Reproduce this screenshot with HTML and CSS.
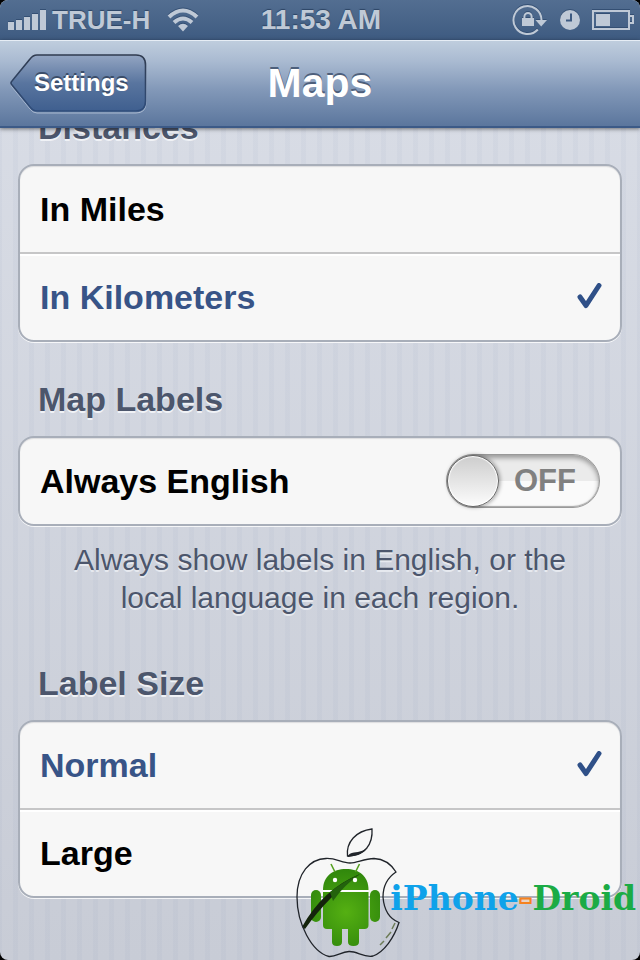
FILE: index.html
```html
<!DOCTYPE html>
<html lang="en">
<head>
  <meta charset="UTF-8" />
  <meta name="viewport" content="width=device-width, initial-scale=1" />
  <title>Maps - Settings</title>
  <link rel="stylesheet" href="styles.css">
</head>
<body>
  <div class="phone">
    <div class="status">
      <div class="status-left">
        <svg class="signal" width="38" height="20" viewBox="0 0 38 20" aria-hidden="true">
          <path d="M0 12h6v8H0zM8 10h6v10H8zM16 7h6v13h-6zM24 4h6v16h-6zM32 0h6v20h-6z"/>
        </svg>
        <span class="carrier">TRUE-H</span>
        <svg class="wifi" width="32" height="24" viewBox="0 0 32 24" aria-hidden="true">
          <path d="M16 23.5l-5-5.500q5-4.500 10 0z"/>
          <path class="line" d="M2 9Q16-4 30 9M7 14.500q9-8 18 0"/>
        </svg>
      </div>
      <span class="time">11:53 AM</span>
      <div class="status-right">
        <svg width="36" height="32" viewBox="0 0 36 32" aria-hidden="true">
          <path class="thin" d="M25.8 25.500A14 14 0 1 1 29.500 16"/>
          <path d="M23.5 16h11.500l-5.800 6.500z"/>
          <path d="M10 14h12v8H10z"/>
          <path class="thin" d="M12.400 15v-2.500a3.600 3.600 0 0 1 7.200 0V15"/>
        </svg>
        <svg class="clock" width="20" height="20" viewBox="0 0 20 20" aria-hidden="true">
          <circle cx="10" cy="10" r="10"/>
          <path class="hands" d="M11 3.5V10.5H6"/>
        </svg>
        <svg class="battery" width="42" height="20" viewBox="0 0 42 20" aria-hidden="true">
          <path class="thin" d="M1 1h36v18H1zM38 6h3v7h-3"/>
          <path d="M4 4h14v12H4z"/>
        </svg>
      </div>
    </div>

    <header class="navbar">
      <button class="back" type="button">
        <svg width="138" height="60" viewBox="0 0 138 60" aria-hidden="true">
          <defs>
            <linearGradient id="backFill" x1="0" y1="0" x2="0" y2="1">
              <stop offset="0" stop-color="#93a5c2"/>
              <stop offset=".5" stop-color="#59759f"/>
              <stop offset="1" stop-color="#3f5f8f"/>
            </linearGradient>
            <linearGradient id="backEdge" x1="0" y1="0" x2="0" y2="1">
              <stop offset="0" stop-color="#303b4f"/>
              <stop offset="1" stop-color="#2f4d7b"/>
            </linearGradient>
          </defs>
          <path d="M27 3H126Q136 3 136 13V49Q136 59 126 59H27Q23 59 20 55L2 33Q0 31 2 28L20 7Q23 3 27 3Z" fill="none" stroke="#a9b8cf" stroke-width="1"/>
          <path d="M27 1H126Q135.500 1 135.500 11V47Q135.500 57 126 57H27Q23 57 20 53L2 31Q0 29 2 27L20 5Q23 1 27 1Z" fill="url(#backFill)" stroke="url(#backEdge)" stroke-width="1.600"/>
        </svg>
        <span>Settings</span>
      </button>
      <h1>Maps</h1>
    </header>

    <main>
      <section role="radiogroup" aria-labelledby="distances">
        <h2 id="distances">Distances</h2>
        <div class="group">
          <label class="row">
            <span>In Miles</span>
            <input type="radio" name="distance">
            <svg class="check" width="26" height="28" viewBox="0 0 26 28" aria-hidden="true"><path d="M4 14l6 8.500L23 2.500"/></svg>
          </label>
          <label class="row">
            <span>In Kilometers</span>
            <input type="radio" name="distance" checked>
            <svg class="check" width="26" height="28" viewBox="0 0 26 28" aria-hidden="true"><path d="M4 14l6 8.500L23 2.500"/></svg>
          </label>
        </div>
      </section>

      <section>
        <h2>Map Labels</h2>
        <div class="group">
          <label class="row">
            <span>Always English</span>
            <input type="checkbox" role="switch">
            <span class="switch" aria-hidden="true"><span class="knob"></span><span class="state">OFF</span></span>
          </label>
        </div>
        <p class="note">Always show labels in English, or the local language in each region.</p>
      </section>

      <section role="radiogroup" aria-labelledby="labelSize">
        <h2 id="labelSize">Label Size</h2>
        <div class="group">
          <label class="row">
            <span>Normal</span>
            <input type="radio" name="size" checked>
            <svg class="check" width="26" height="28" viewBox="0 0 26 28" aria-hidden="true"><path d="M4 14l6 8.500L23 2.500"/></svg>
          </label>
          <label class="row">
            <span>Large</span>
            <input type="radio" name="size">
            <svg class="check" width="26" height="28" viewBox="0 0 26 28" aria-hidden="true"><path d="M4 14l6 8.500L23 2.500"/></svg>
          </label>
        </div>
      </section>
    </main>

    <div class="watermark">
      <svg class="logo" width="110" height="140" viewBox="0 0 110 140" aria-hidden="true">
        <defs>
          <radialGradient id="droid" gradientUnits="userSpaceOnUse" cx="56" cy="92" r="44">
            <stop offset="0" stop-color="#55b012"/>
            <stop offset="1" stop-color="#2f860c"/>
          </radialGradient>
        </defs>
        <g fill="url(#droid)">
          <path d="M33 70C33 56 43 49 56 49s22.500 7 22.500 21z"/>
          <path d="M33 72h45.500v33q0 4-4 4H37q-4 0-4-4z"/>
          <rect x="21" y="70" width="10" height="32" rx="5"/>
          <rect x="80" y="70" width="10" height="32" rx="5"/>
          <path d="M42 108h10v14q0 4-5 4t-5-4zM58 108h11v14q0 4-5.500 4t-5.500-4z"/>
        </g>
        <path d="M41 44l4 8M69.500 44l-4 8" stroke="#55a020" stroke-width="1.600" fill="none"/>
        <path d="M33 71h45.500" stroke="#fff" stroke-width="1.300"/>
        <path d="M12 107Q33 69 70 54Q39 75 15 109z" fill="#14240c"/>
        <path d="M43 81Q54 65 70 54Q54 61 40 72z" fill="#23620d"/>
        <circle cx="45" cy="60" r="2.200" fill="#fff"/>
        <circle cx="65" cy="60" r="2.200" fill="#fff"/>
        <g fill="none" stroke="#20242a" stroke-width="1.300">
          <path d="M60 43C67 43 74 38.500 84 38.500C95 39 101 44 106 52C97 58 93 66 93 77C94 90 100 99 109 102.500C104 118 94 132 83 136C74 138 67 131 59 131.500C51 132 46 137 39 136.500C22 132 7 104 7 77C7 53 20 39 36 38.500C46 38 52 43 60 43Z"/>
          <path d="M57.500 36C56 22 66 11 82 9C83 24 75 36 57.500 36Z"/>
        </g>
        <path d="M58 36q1-3 6-3.500 8-.5 14-5-5 8-20 9.500z" fill="#20242a"/>
        <path d="M90 125l4-4m2-3l5-6m1-3l3-6" stroke="#6d7c58" stroke-width="1.500" fill="none"/>
      </svg>
      <span class="brand"><span class="blue">iPhone</span><span class="dash">-</span><span class="green">Droid</span></span>
    </div>
  </div>
</body>
</html>
```

FILE: styles.css
```css
* { box-sizing: border-box; }
html { background: #000; }
body { margin: 0; font-family: "Liberation Sans", Arial, sans-serif; }
h1, h2, p { margin: 0; }

.phone {
  position: relative;
  min-height: 100vh;
  overflow: hidden;
  border-radius: 8px;
  background:
    repeating-linear-gradient(90deg, rgba(110, 130, 170, 0.05) 0 2px, transparent 2px 13px, rgba(110, 130, 170, 0.05) 13px 16px),
    linear-gradient(#dadee7, #c8ccd6);
}

/* status bar */
.status {
  display: grid;
  grid-template-columns: 1fr auto 1fr;
  align-items: center;
  height: 40px;
  padding: 0 6px 0 8px;
  background: linear-gradient(#536e91, #3e5b81);
  color: #bfc9d6;
  font-weight: bold;
  text-shadow: 0 -1px 1px #2d4565;
}
.status svg {
  fill: #bfc9d6;
  filter: drop-shadow(0 -1px 0 #344f73);
}
.status-left, .status-right { display: flex; align-items: center; }
.status-right { justify-content: flex-end; height: 38px; }
.carrier { margin: 0 17px 0 6px; font-size: 26px; }
.time { font-size: 28px; }
.status .line { fill: none; stroke: #bfc9d6; stroke-width: 4; }
.status .thin { fill: none; stroke: #bfc9d6; stroke-width: 2; }
.status .hands { fill: none; stroke: #3e5b81; stroke-width: 2; }
.clock { margin: 0 12px; }

/* navigation bar */
.navbar {
  position: relative;
  z-index: 1;
  display: grid;
  grid-template-columns: 1fr auto 1fr;
  align-items: center;
  height: 88px;
  padding: 0 10px;
  border-bottom: 2px solid #3c5a87;
  background: linear-gradient(#c0cede, #a9bad1 25%, #8298b8 58%, #5b769d);
  box-shadow: 0 1px 4px rgba(0, 0, 0, 0.5), inset 0 1px 0 #e6edf5;
  color: #fff;
}
.navbar h1 {
  grid-column: 2;
  font-size: 41px;
  text-shadow: 0 -2px 0 #4d5f7b;
}
.back {
  position: relative;
  justify-self: start;
  height: 58px;
  padding: 0 18px 0 24px;
  border: 0;
  background: none;
  color: #fff;
  font: bold 24px "Liberation Sans", Arial, sans-serif;
  text-shadow: 0 -2px 0 #3b4d69;
  cursor: pointer;
}
.back svg { position: absolute; left: 0; top: 0; }
.back span { position: relative; }

/* settings list */
main {
  display: flex;
  flex-direction: column;
  gap: 37px;
  margin-top: -21px;
  padding: 0 18px 62px;
}
h2 {
  padding: 0 20px;
  margin-bottom: 17px;
  color: #4c566c;
  font-size: 34px;
  line-height: 40px;
  text-shadow: 0 2px 0 #f0f2f6;
}
.group {
  overflow: hidden;
  border: 2px solid #a8aeb9;
  border-radius: 16px;
  background: #f7f7f7;
  box-shadow: 0 1px 0 rgba(255, 255, 255, 0.8), inset 0 1px 1px #dcdcde;
}
.row {
  display: flex;
  align-items: center;
  justify-content: space-between;
  height: 86px;
  padding: 0 18px 0 20px;
  color: #000;
  font-size: 34px;
  font-weight: bold;
  cursor: pointer;
}
.row + .row {
  height: 88px;
  border-top: 2px solid #c6c6c7;
  box-shadow: inset 0 2px 0 #fff;
}
.row input {
  appearance: none;
  width: 0;
  height: 0;
  margin: 0;
}
.row:has(input[type="radio"]:checked) { color: #385487; }
.check {
  visibility: hidden;
  fill: none;
  stroke: #2f5088;
  stroke-width: 5;
  stroke-linecap: round;
  stroke-linejoin: round;
}
input:checked + .check { visibility: visible; }

.switch {
  display: flex;
  align-items: center;
  width: 154px;
  height: 54px;
  margin-right: 2px;
  border: 1px solid #999;
  border-radius: 27px;
  background: linear-gradient(#ebebeb 50%, #fafafa 50%);
  box-shadow: inset 0 3px 5px rgba(0, 0, 0, 0.35), inset 0 -1px 1px #aaa;
}
.knob {
  width: 52px;
  height: 52px;
  border: 1px solid #666;
  border-radius: 50%;
  background: linear-gradient(#cdcdcd, #fcfcfc);
  box-shadow: 1px 0 4px rgba(0, 0, 0, 0.4), inset 0 0 1px 1px #fff;
}
.state {
  flex: 1;
  padding-right: 8px;
  color: #808080;
  font-size: 31px;
  text-align: center;
}
input:checked + .switch { flex-direction: row-reverse; }

.note {
  max-width: 540px;
  margin: 15px auto 9px;
  color: #4c566c;
  font-size: 30px;
  line-height: 38px;
  text-align: center;
  text-shadow: 0 2px 0 #e6e9ef;
}

/* logo laid over the list */
.watermark {
  position: absolute;
  right: 4px;
  bottom: 0;
  display: flex;
  align-items: center;
  height: 140px;
  pointer-events: none;
}
.logo { margin-right: -10px; }
.brand {
  padding-top: 18px;
  font: bold 33px/40px "DejaVu Serif", serif;
}
.blue { color: #0fa2ea; }
.dash { color: #e8d3c4; -webkit-text-stroke: 2px #f58220; }
.green { color: #1bab45; }
```
